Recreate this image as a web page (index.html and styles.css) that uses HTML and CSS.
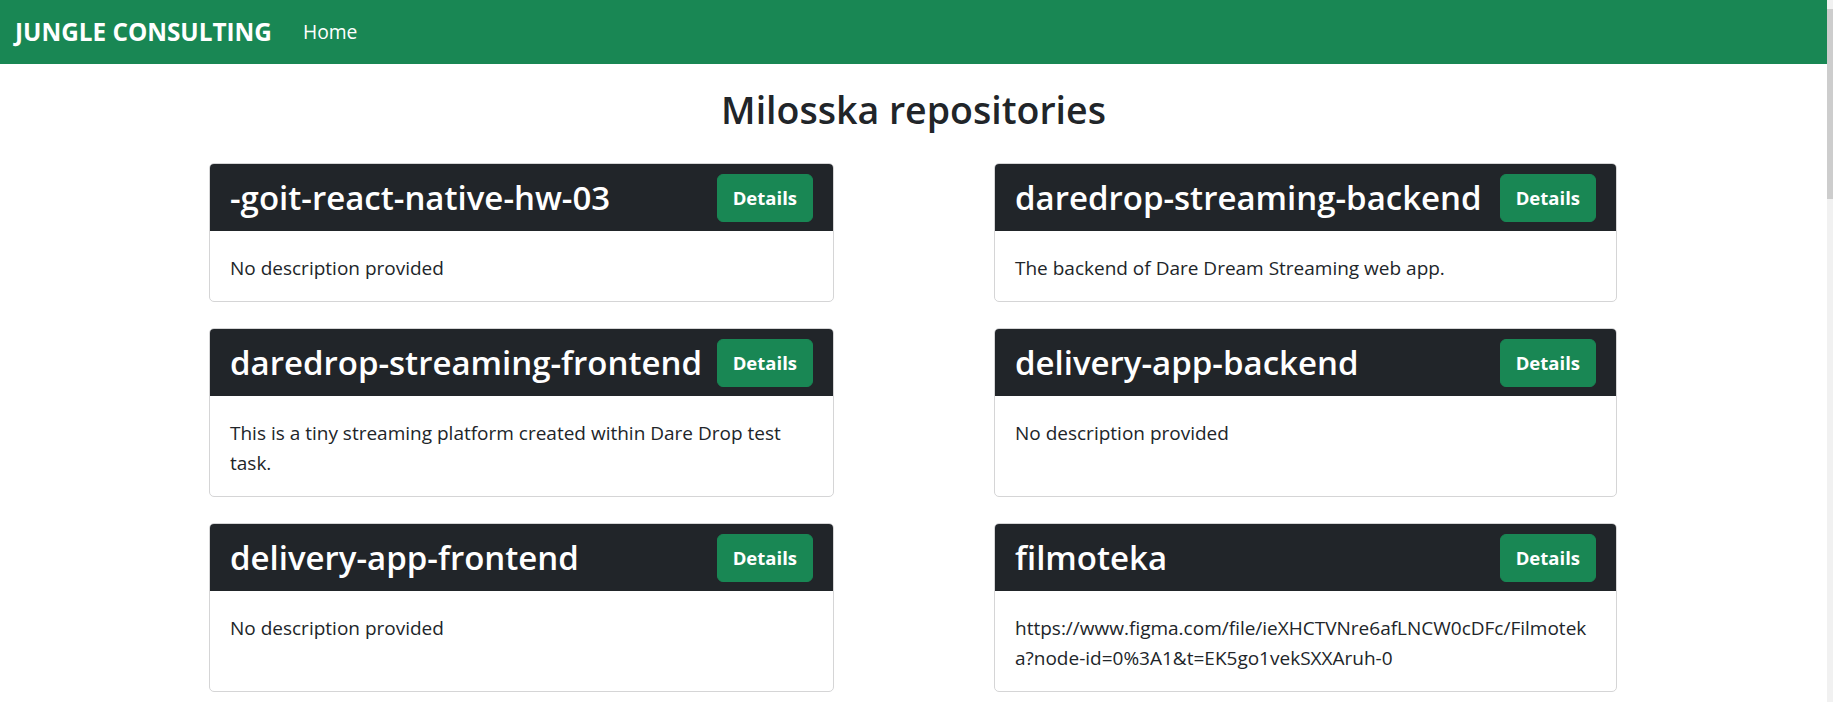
FILE: index.html
```html
<!DOCTYPE html>
<html lang="en">
<head>
<meta charset="utf-8">
<title>Milosska repositories</title>
<link rel="stylesheet" href="styles.css">
</head>
<body>
<div class="page">
  <div class="main">
    <nav class="navbar">
      <a class="brand" href="#">JUNGLE CONSULTING</a>
      <a class="nav-link" href="#">Home</a>
    </nav>
    <h2 class="page-title">Milosska repositories</h2>
    <div class="repo-grid">
      <div class="card">
        <div class="card-header"><h3 class="repo-name">-goit-react-native-hw-03</h3><button class="btn">Details</button></div>
        <div class="card-body">No description provided</div>
      </div>
      <div class="card">
        <div class="card-header"><h3 class="repo-name">daredrop-streaming-backend</h3><button class="btn">Details</button></div>
        <div class="card-body">The backend of Dare Dream Streaming web app.</div>
      </div>
      <div class="card">
        <div class="card-header"><h3 class="repo-name">daredrop-streaming-frontend</h3><button class="btn">Details</button></div>
        <div class="card-body">This is a tiny streaming platform created within Dare Drop test task.</div>
      </div>
      <div class="card">
        <div class="card-header"><h3 class="repo-name">delivery-app-backend</h3><button class="btn">Details</button></div>
        <div class="card-body">No description provided</div>
      </div>
      <div class="card">
        <div class="card-header"><h3 class="repo-name">delivery-app-frontend</h3><button class="btn">Details</button></div>
        <div class="card-body">No description provided</div>
      </div>
      <div class="card">
        <div class="card-header"><h3 class="repo-name">filmoteka</h3><button class="btn">Details</button></div>
        <div class="card-body url">https://www.figma.com/file/ieXHCTVNre6afLNCW0cDFc/Filmotek<br>a?node-id=0%3A1&amp;t=EK5go1vekSXXAruh-0</div>
      </div>
    </div>
  </div>
  <div class="scrollbar"><div class="scroll-thumb"></div></div>
</div>
</body>
</html>
```

FILE: styles.css
```css
* { box-sizing: border-box; }
html, body { margin: 0; padding: 0; height: 100%; overflow: hidden; }
body {
  font-family: "Open Sans", "Noto Sans", sans-serif;
  color: #212529;
  background: #fff;
  font-size: 19px;
  line-height: 1.5;
}
.page { display: flex; height: 702px; }
.main { flex: 1; min-width: 0; }
.scrollbar { width: 6px; background: #f1f1f1; padding-top: 9px; }
.scroll-thumb { height: 190px; background: #cdcdcd; }

.navbar {
  background: #198754;
  height: 64px;
  display: flex;
  align-items: center;
  padding: 0 15px;
}
.brand {
  color: #fff;
  font-weight: 700;
  font-size: 24.3px;
  text-decoration: none;
  margin-right: 31px;
}
.nav-link { color: #fff; text-decoration: none; font-size: 19.3px; }

.page-title {
  margin: 0;
  padding-top: 23px;
  height: 99px;
  text-align: center;
  font-weight: 600;
  font-size: 37.5px;
  line-height: 1.2;
}

.repo-grid {
  display: grid;
  grid-template-columns: 625px 623px;
  justify-content: space-between;
  row-gap: 26px;
  padding: 0 210px 0 209px;
  align-items: start;
}
.card {
  border: 1px solid #d5d5d6;
  border-radius: 5px;
  overflow: hidden;
  background: #fff;
}
.card-header {
  background: #212529;
  color: #fff;
  display: flex;
  align-items: center;
  justify-content: space-between;
  padding: 10px 20px 9px 20px;
}
.repo-name {
  margin: 0;
  font-size: 33px;
  font-weight: 600;
  line-height: 1.2;
  white-space: nowrap;
}
.btn {
  font-family: inherit;
  background: #198754;
  color: #fff;
  border: 1px solid #198754;
  border-radius: 6px;
  font-weight: 700;
  font-size: 18.5px;
  line-height: 28px;
  height: 48px;
  padding: 0 15px;
  flex-shrink: 0;
  margin-left: 12px;
}
.card-body {
  padding: 22px 19px 18px 20px;
  line-height: 30px;
  min-height: 100px;
}
.repo-grid .card:nth-child(1) .card-body,
.repo-grid .card:nth-child(2) .card-body { min-height: 0; }
.url { word-break: break-all; }
```
